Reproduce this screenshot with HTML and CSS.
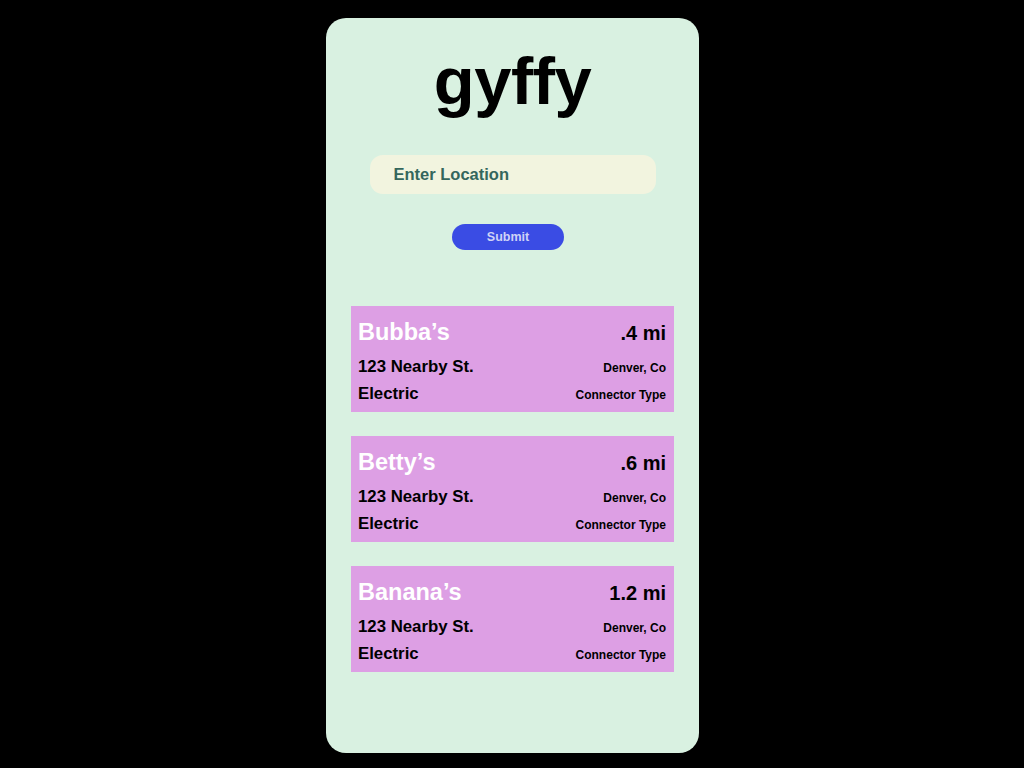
FILE: index.html
```html
<!DOCTYPE html>
<html lang="en">
<head>
<meta charset="utf-8">
<title>gyffy</title>
<link rel="stylesheet" href="styles.css">
</head>
<body>
<main class="phone">
  <h1 class="logo">gyffy</h1>
  <div class="search">
    <input class="location" type="text" placeholder="Enter Location">
  </div>
  <button class="submit" type="button">Submit</button>
  <ul class="results">
    <li class="card">
      <div class="row row-top"><span class="name">Bubba’s</span><span class="dist">.4 mi</span></div>
      <div class="row"><span class="main">123 Nearby St.</span><span class="sub">Denver, Co</span></div>
      <div class="row"><span class="main">Electric</span><span class="sub">Connector Type</span></div>
    </li>
    <li class="card">
      <div class="row row-top"><span class="name">Betty’s</span><span class="dist">.6 mi</span></div>
      <div class="row"><span class="main">123 Nearby St.</span><span class="sub">Denver, Co</span></div>
      <div class="row"><span class="main">Electric</span><span class="sub">Connector Type</span></div>
    </li>
    <li class="card">
      <div class="row row-top"><span class="name">Banana’s</span><span class="dist">1.2 mi</span></div>
      <div class="row"><span class="main">123 Nearby St.</span><span class="sub">Denver, Co</span></div>
      <div class="row"><span class="main">Electric</span><span class="sub">Connector Type</span></div>
    </li>
  </ul>
</main>
</body>
</html>
```

FILE: styles.css
```css
html, body {
  margin: 0;
  padding: 0;
  background: #000;
  height: 100%;
}
body {
  display: flex;
  justify-content: center;
  align-items: flex-start;
  font-family: "Liberation Sans", Arial, sans-serif;
  font-weight: 700;
}
.phone {
  margin-top: 18px;
  margin-left: 1px;
  width: 373px;
  height: 735px;
  box-sizing: border-box;
  background: #d9f1e1;
  border-radius: 20px;
  display: flex;
  flex-direction: column;
  align-items: center;
  padding-top: 30px;
}
.logo {
  margin: 0;
  font-size: 67px;
  line-height: 66px;
  font-weight: 700;
  color: #000;
  letter-spacing: -0.5px;
}
.search {
  margin-top: 41px;
  width: 286px;
}
.location {
  display: block;
  width: 100%;
  height: 39px;
  box-sizing: border-box;
  border: none;
  outline: none;
  border-radius: 13px;
  background: #f2f4df;
  padding: 0 0 0 24px;
  font-family: "Liberation Sans", Arial, sans-serif;
  font-weight: 700;
  font-size: 16.5px;
  color: #34665c;
}
.location::placeholder {
  color: #34665c;
  opacity: 1;
}
.submit {
  margin-top: 30px;
  margin-right: 9px;
  width: 112px;
  height: 26px;
  border: none;
  border-radius: 13px;
  background: #3a4ce4;
  color: #cfd3f6;
  font-family: "Liberation Sans", Arial, sans-serif;
  font-weight: 700;
  font-size: 12.5px;
  padding: 0;
}
.results {
  list-style: none;
  margin: 56px 0 0;
  padding: 0;
  width: 323px;
  display: flex;
  flex-direction: column;
  gap: 24px;
}
.card {
  background: #dd9fe4;
  height: 106px;
  box-sizing: border-box;
  padding: 12px 8px 0 7px;
  display: flex;
  flex-direction: column;
}
.row {
  display: flex;
  justify-content: space-between;
  align-items: baseline;
  line-height: 22px;
}
.row-top {
  line-height: 28px;
  margin-bottom: 9px;
}
.row + .row:last-child {
  margin-top: 4px;
}
.name {
  color: #fff;
  font-size: 23.5px;
}
.dist {
  color: #000;
  font-size: 20px;
}
.main {
  color: #000;
  font-size: 16.8px;
}
.sub {
  color: #000;
  font-size: 12px;
}
```
